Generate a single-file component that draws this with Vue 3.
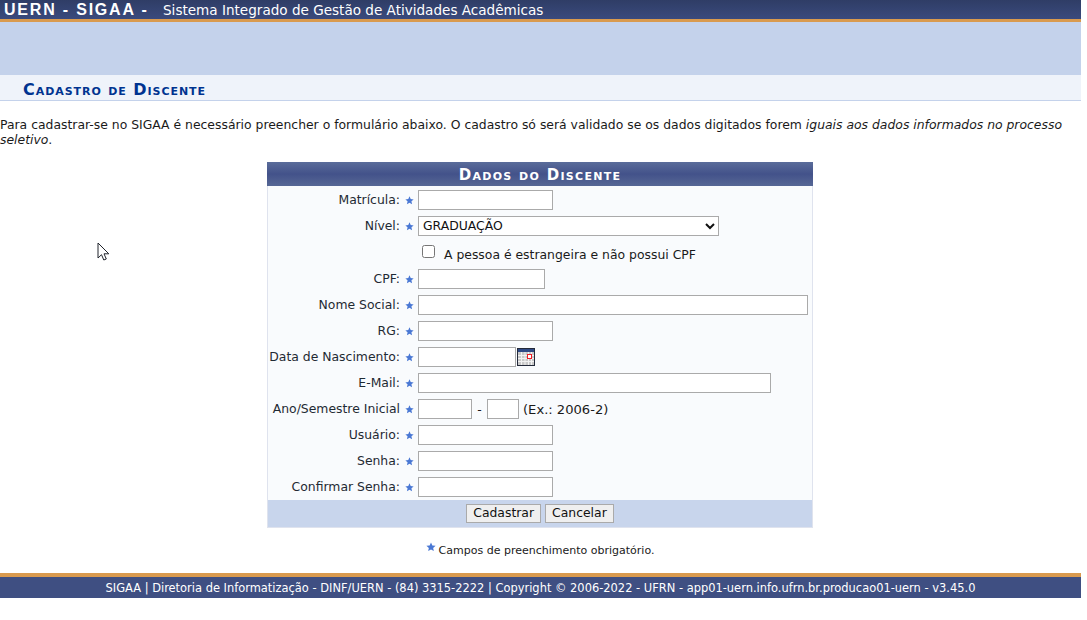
<script setup>
const rows = [
  { label: 'Matrícula:', kind: 'w135' },
  { label: 'Nível:', kind: 'select' },
  { kind: 'check' },
  { label: 'CPF:', kind: 'w127' },
  { label: 'Nome Social:', kind: 'w390' },
  { label: 'RG:', kind: 'w135' },
  { label: 'Data de Nascimento:', kind: 'date' },
  { label: 'E-Mail:', kind: 'w353' },
  { label: 'Ano/Semestre Inicial', kind: 'year' },
  { label: 'Usuário:', kind: 'w135' },
  { label: 'Senha:', kind: 'w135' },
  { label: 'Confirmar Senha:', kind: 'w135' }
]
</script>

<template>
  <div class="page">
    <header class="top">
      <strong class="brand">UERN - SIGAA -</strong>
      <span class="system">Sistema Integrado de Gestão de Atividades Acadêmicas</span>
    </header>
    <div class="band"></div>
    <h2 class="title">Cadastro de Discente</h2>
    <p class="intro">Para cadastrar-se no SIGAA é necessário preencher o formulário abaixo. O cadastro só será validado se os dados digitados forem <em>iguais aos dados informados no processo seletivo</em>.</p>

    <form class="card" @submit.prevent>
      <div class="caption">Dados do Discente</div>
      <div class="rows">
        <div v-for="(r, i) in rows" :key="i" class="row" :class="{ checkrow: r.kind === 'check' }">
          <template v-if="r.kind === 'check'">
            <label class="check"><input type="checkbox" /><span>A pessoa é estrangeira e não possui CPF</span></label>
          </template>
          <template v-else>
            <label class="label">{{ r.label }}</label>
            <svg class="star" viewBox="0 0 10 10"><path d="M5 .4l1.35 3 3.25.35-2.45 2.15.7 3.2L5 7.45 2.15 9.1l.7-3.2L.4 3.75l3.25-.35z" /></svg>
            <div class="field">
              <select v-if="r.kind === 'select'" class="input select"><option>GRADUAÇÃO</option></select>
              <template v-else-if="r.kind === 'date'">
                <input class="input w98" />
                <svg class="cal" viewBox="0 0 18 18">
                  <rect x="0.5" y="0.5" width="17" height="17" fill="#c9c9c9" stroke="#232a3a" />
                  <rect x="1" y="1" width="16" height="3" fill="#2f4a86" />
                  <path d="M4.500 4v13M8 4v13M11.500 4v13M14.500 4v13M1 7.500h16M1 10.500h16M1 13.500h16" stroke="#f2f2f2" stroke-width="1" />
                  <rect x="10.500" y="6.500" width="4" height="4" fill="#fff" stroke="#ee1c25" />
                </svg>
              </template>
              <template v-else-if="r.kind === 'year'">
                <input class="input w54" />
                <span class="dash">-</span>
                <input class="input w32" />
                <span class="hint">(Ex.: 2006-2)</span>
              </template>
              <input v-else class="input" :class="r.kind" />
            </div>
          </template>
        </div>
      </div>
      <div class="actions">
        <button type="button" class="btn">Cadastrar</button>
        <button type="button" class="btn">Cancelar</button>
      </div>
    </form>

    <p class="note">
      <svg class="star note-star" viewBox="0 0 10 10"><path d="M5 .4l1.35 3 3.25.35-2.45 2.15.7 3.2L5 7.45 2.15 9.1l.7-3.2L.4 3.75l3.25-.35z" /></svg>
      <span class="note-text">Campos de preenchimento obrigatório.</span>
    </p>

    <footer class="foot">SIGAA | Diretoria de Informatização - DINF/UERN - (84) 3315-2222 | Copyright © 2006-2022 - UFRN - app01-uern.info.ufrn.br.producao01-uern - v3.45.0</footer>

    <svg class="cursor" viewBox="0 0 13 20" width="13" height="20">
      <path d="M1 1v15l3.500-3.300 2.300 5.300 2.500-1-2.300-5.200h4.800z" fill="#fff" stroke="#20242c" stroke-width="1" stroke-linejoin="miter" />
    </svg>
  </div>
</template>

<style>
html, body { background: #fff; }
</style>

<style scoped>
.page {
  position: relative;
  width: 1081px;
  height: 620px;
  overflow: hidden;
  font-family: "DejaVu Sans", Verdana, sans-serif;
  font-size: 12.4px;
  color: #1a1a1a;
}
.top {
  height: 19px;
  border-bottom: 3px solid #d99a4e;
  background: linear-gradient(#2f3d66, #3a4a7d);
  color: #fff;
  display: flex;
  align-items: center;
  overflow: hidden;
  padding-left: 4px;
  white-space: nowrap;
}
.brand {
  width: 159px;
  font: bold 16px "Liberation Sans", Arial, sans-serif;
  letter-spacing: 1.8px;
}
.system { font-size: 13.57px; }
.band { height: 53px; background: #c4d2eb; }
.title {
  margin: 0;
  height: 26px;
  box-sizing: border-box;
  padding: 6px 0 0 23px;
  background: #eff3fa;
  border-bottom: 1px solid #c4d2eb;
  color: #003390;
  font: bold 16px/18px "DejaVu Sans", Verdana, sans-serif;
  font-variant: small-caps;
  letter-spacing: 0.95px;
}
.intro {
  margin: 0;
  padding: 16px 0 0;
  height: 61px;
  box-sizing: border-box;
  line-height: 15px;
}
.card {
  display: block;
  width: 546px;
  margin: 0 0 0 267px;
  box-sizing: border-box;
  background: #f9fbfd;
  border: 1px solid #dfe3ee;
  border-top: 0;
}
.caption {
  height: 24px;
  margin: 0 -1px;
  background: linear-gradient(#5a6c9a, #43528a 50%, #566795);
  color: #fff;
  text-align: center;
  font: bold 15px/26px "DejaVu Sans", Verdana, sans-serif;
  font-variant: small-caps;
  letter-spacing: 1.3px;
}
.rows { padding-top: 4px; }
.row {
  display: grid;
  grid-template-columns: 132px 18px 1fr;
  height: 26px;
  align-items: start;
}
.row:last-child { height: 23px; }
.checkrow { height: 27px; }
.label { text-align: right; line-height: 20px; white-space: nowrap; color: #1f2a33; }
.star { width: 9px; height: 9px; margin: 6px 0 0 5px; fill: #4a78d4; }
.field { display: flex; align-items: center; height: 20px; }
.input {
  box-sizing: border-box;
  height: 20px;
  border: 1px solid #aaa;
  background: #fff;
  padding: 0 4px;
  margin: 0;
  font: 12.4px "DejaVu Sans", Verdana, sans-serif;
  color: #111;
  border-radius: 0;
}
.w135 { width: 135px; }
.w127 { width: 127px; }
.w390 { width: 390px; }
.w353 { width: 353px; }
.w98 { width: 98px; }
.w54 { width: 54px; }
.w32 { width: 32px; }
.select { width: 301px; padding: 0 0 2px; }
.cal { width: 18px; height: 18px; margin-left: 1px; }
.dash { width: 15px; text-align: center; }
.hint { margin-left: 4px; font-size: 13.1px; }
.check {
  display: flex;
  align-items: flex-start;
  grid-column: 3;
  height: 20px;
  margin-top: 3px;
  line-height: 20px;
}
.check input {
  width: 13px;
  height: 13px;
  margin: 0 9px 0 4px;
}
.actions {
  height: 27px;
  background: #c8d5ec;
  display: flex;
  justify-content: center;
  align-items: center;
  gap: 4px;
}
.btn {
  height: 19px;
  padding: 0 6px 2px;
  border: 1px solid #aaa;
  background: #efefef;
  font: 12.4px "DejaVu Sans", Verdana, sans-serif;
  color: #111;
  border-radius: 0;
}
.note {
  margin: 0;
  height: 45px;
  box-sizing: border-box;
  padding-top: 14px;
  display: flex;
  justify-content: center;
  align-items: flex-start;
  gap: 3px;
  font-size: 11px;
  line-height: 14px;
}
.note-star { width: 10px; height: 10px; margin: 0 0 0 -1px; }
.note-text { margin-top: 2px; }
.foot {
  height: 21px;
  overflow: hidden;
  border-top: 4px solid #d99a4e;
  background: #3f4f82;
  color: #fff;
  text-align: center;
  font-size: 11.44px;
  line-height: 23px;
}
.cursor { position: absolute; left: 97px; top: 242px; }
</style>
